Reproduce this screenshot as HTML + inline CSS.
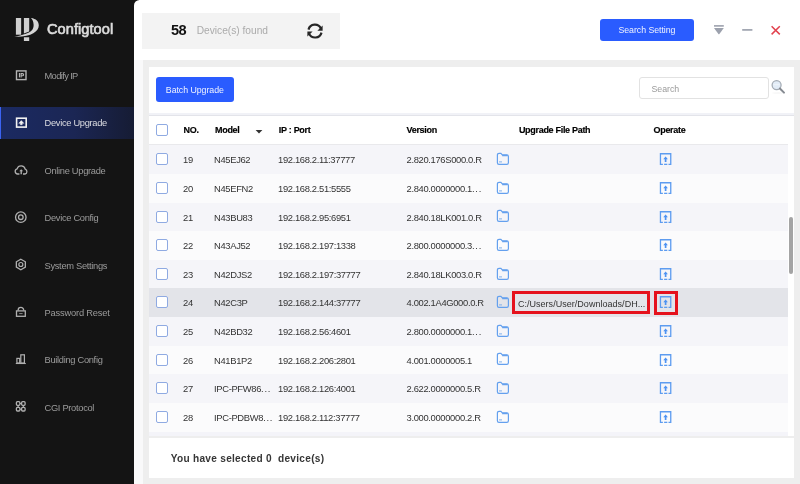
<!DOCTYPE html>
<html><head><meta charset="utf-8">
<style>
*{margin:0;padding:0;box-sizing:border-box}
html,body{width:800px;height:484px;overflow:hidden;background:#141414;font-family:"Liberation Sans",sans-serif}
#side{position:absolute;left:0;top:0;width:134px;height:484px;background:#141414}
.logo{position:absolute;left:0;top:0}
.brand{position:absolute;left:47px;top:19px;color:#dcdcdc;font-size:14.6px;font-weight:normal;letter-spacing:0.05px;line-height:20px;-webkit-text-stroke:0.65px #dcdcdc}
.nav{position:absolute;left:0;width:134px;height:31.3px;color:#9c9c9c;font-size:9.3px;line-height:35px}
.nav .t{position:absolute;left:44.5px;top:0;letter-spacing:-0.3px}
.nav.act{background:linear-gradient(90deg,#1b2a62 0%,#1b2654 55%,#161c34 100%);color:#dcdde2}
.nav.act .t{top:-1.4px}
.nav.act:before{content:"";position:absolute;left:0;top:0;width:1.3px;height:100%;background:#3b63f2}
.icons{position:absolute;left:0;top:0}
#main{position:absolute;left:134px;top:0;width:666px;height:484px;background:#fff;border-top-left-radius:5.5px}
.found{position:absolute;left:8.3px;top:13px;width:198px;height:36.3px;background:#f3f3f3}
.found .n{position:absolute;left:28.7px;top:0;line-height:35px;font-size:14.6px;font-weight:bold;color:#111;letter-spacing:-0.7px}
.found .l{position:absolute;left:54.4px;top:0;line-height:36px;font-size:10.2px;color:#ababab}
.btn{position:absolute;background:#2a5cff;color:#eef2ff;border-radius:3px;font-size:8.8px;text-align:center;letter-spacing:-0.05px}
#content{position:absolute;left:9px;top:60px;width:657px;height:424px;background:#eeeeee}
#card{position:absolute;left:5.5px;top:6.5px;width:645.5px;height:369px;background:#fff}
#foot{position:absolute;left:5.5px;top:377.8px;width:645.5px;height:40px;background:#fff}
#foot .t{position:absolute;left:22.3px;top:0;line-height:41.6px;font-size:10.1px;font-weight:bold;color:#363636;white-space:pre;letter-spacing:0.28px}
.search{position:absolute;left:490.3px;top:10.6px;width:129.8px;height:21.8px;border:1px solid #e2e2e2;border-radius:3px;font-size:8.8px;color:#9a9a9a;line-height:23.4px;padding-left:11.6px}
.band{position:absolute;left:0;top:46.4px;width:645.5px;height:3.3px;background:#f1f2f7;border-bottom:1px solid #e3e4ea}
.hdr{position:absolute;left:0;top:49.7px;width:639.3px;height:28.8px;background:#fff;border-bottom:1px solid #e9e9ec;font-size:9px;font-weight:bold;color:#000;letter-spacing:-0.3px;-webkit-text-stroke:0.15px #000}
.hdr span{position:absolute;top:0;line-height:29.3px;white-space:nowrap}
.row{position:absolute;left:0;width:639.3px;height:28.6px;font-size:9.4px;color:#333;letter-spacing:-0.33px}
.row span{position:absolute;top:0;line-height:30.9px;white-space:nowrap}
.sh{background:#f5f5f9}.wh{background:#fbfbfc}.hl{background:#e3e4e9}
.cb{position:absolute;left:7.1px;top:8.1px;width:12.2px;height:11.9px;border:1.2px solid #8faae2;border-radius:2px;background:#fff}
.hdr .cb{top:8.3px}
.c1{left:34.5px}.c2{left:65.5px}.c3{left:129.5px}.c4{left:258px}
.hdr .c1{left:35px}.hdr .c2{left:66.5px}.hdr .c3{left:130.3px}
.fo{position:absolute;left:347.3px;top:6.9px}
.up{position:absolute;left:510.4px;top:7.0px}
.pathbox{position:absolute;left:363.5px;top:2.2px;width:137.5px;height:23.9px;border:3.2px solid #e5121d;background:#e3e4e9;font-size:9px;color:#333;line-height:21.3px;padding-left:2.9px;white-space:nowrap;letter-spacing:0.03px;overflow:hidden}
.opbox{position:absolute;left:505.4px;top:2.5px;width:24.4px;height:24.6px;border:3.2px solid #e5121d}
.scroll{position:absolute;left:640.9px;top:150.9px;width:4px;height:56.3px;background:#a4a4a4;border-radius:2px}
.el{font-style:normal;letter-spacing:0.75px}
.strip{position:absolute;left:0;top:364.2px;width:639.3px;height:5.3px;background:linear-gradient(#fbfbfc 0,#fbfbfc 1px,#f4f4f9 1px)}
#side,#main{will-change:transform}
</style></head><body>
<div id="side">
  <svg class="logo" width="45" height="45" viewBox="0 0 45 45">
    <path d="M15.9 18h5.25v16.7H15.9z" fill="#d0d0d0"/>
    <path d="M23.9 18.1h5.3V31.4L23.9 33.5z" fill="#d0d0d0"/>
    <path d="M23.9 37.2h5.3v3.8h-5.3z" fill="#d0d0d0"/>
    <path d="M30.9 18C36.2 18.6 38.9 21.6 38.8 25.6C38.6 31.8 31 37.3 14.3 36.7C22.5 35.6 29 33.2 31.6 30.6C33.3 28.7 33.8 26.5 33.6 24.5C33.4 21.6 32.6 19.5 30.9 18Z" fill="#d4d4d4"/>
  </svg>
  <div class="brand">Configtool</div>
  
  <div class="nav" style="top:59.3px"><span class="t" style="letter-spacing:-0.62px">Modify IP</span></div>
  <div class="nav act" style="top:107.4px"><span class="t">Device Upgrade</span></div>
  <div class="nav" style="top:154.4px"><span class="t">Online Upgrade</span></div>
  <div class="nav" style="top:201.4px"><span class="t">Device Config</span></div>
  <div class="nav" style="top:249.4px"><span class="t">System Settings</span></div>
  <div class="nav" style="top:296.1px"><span class="t" style="letter-spacing:-0.18px">Password Reset</span></div>
  <div class="nav" style="top:343.2px"><span class="t">Building Config</span></div>
  <div class="nav" style="top:391.4px"><span class="t">CGI Protocol</span></div>
  <svg class="icons" width="40" height="484" viewBox="0 0 40 484" fill="none">
    <!-- Modify IP -->
    <rect x="16.5" y="70.9" width="9.5" height="8.7" stroke="#b4b4b4" stroke-width="1.4"/>
    <path d="M18.9 73h1.2v4.4h-1.2z" fill="#b4b4b4"/>
    <path d="M21.1 77.4V73.6h1.4a1.1 1.1 0 0 1 0 2.2h-1.4" stroke="#b4b4b4" stroke-width="1.1"/>
    <!-- Device upgrade -->
    <rect x="16.6" y="118.2" width="9.6" height="8.9" stroke="#f2f2f2" stroke-width="1.6"/>
    <path d="M18.8 123.3L21.3 120.6L23.8 123.3H22.2V124.7H20.4V123.3Z" fill="#f2f2f2" stroke="#f2f2f2" stroke-width="0.5" stroke-linejoin="round"/>
    <!-- Online upgrade cloud -->
    <path d="M19.4 174H17.6a2.6 2.6 0 0 1 -0.5 -5.1a4.2 4.2 0 0 1 8.1 0.3a2.5 2.5 0 0 1 -0.2 4.8H23" stroke="#b0b0b0" stroke-width="1.3"/>
    <path d="M21.2 169.2l-2 2.1h1.3v2.9h1.4v-2.9h1.3z" fill="#b0b0b0"/>
    <!-- device config target -->
    <circle cx="20.8" cy="217.2" r="5.25" stroke="#b0b0b0" stroke-width="1.3"/>
    <circle cx="20.8" cy="217.2" r="2.3" stroke="#b0b0b0" stroke-width="1.3"/>
    <!-- system settings hex -->
    <path d="M20.85 259.2l4.5 2.6v5.3l-4.5 2.6l-4.5-2.6v-5.3z" stroke="#b0b0b0" stroke-width="1.3"/>
    <circle cx="20.85" cy="264.5" r="2" stroke="#b0b0b0" stroke-width="1.2"/>
    <!-- password lock -->
    <path d="M18.1 310.6v-0.4a2.8 2.8 0 0 1 5.6 0v0.4" stroke="#b0b0b0" stroke-width="1.3"/>
    <rect x="16.5" y="310.9" width="8.8" height="5.4" stroke="#b0b0b0" stroke-width="1.3"/>
    <path d="M19.2 313.6h3.4" stroke="#8a8a8a" stroke-width="1"/>
    <!-- building -->
    <rect x="16.9" y="358.4" width="2.8" height="4.6" stroke="#b0b0b0" stroke-width="1.2"/>
    <rect x="20.8" y="354.8" width="3.6" height="8.2" stroke="#b0b0b0" stroke-width="1.2"/>
    <path d="M15.8 363.5h10" stroke="#b0b0b0" stroke-width="1.1"/>
    <!-- CGI -->
    <rect x="16.4" y="401.7" width="3.5" height="3.6" rx="1" stroke="#b0b0b0" stroke-width="1.3"/>
    <rect x="21.6" y="401.7" width="3.5" height="3.6" rx="1" stroke="#b0b0b0" stroke-width="1.3"/>
    <rect x="16.4" y="407.4" width="3.5" height="3.6" rx="1" stroke="#b0b0b0" stroke-width="1.3"/>
    <rect x="21.6" y="407.4" width="3.5" height="3.6" rx="1" stroke="#b0b0b0" stroke-width="1.3"/>
    <path d="M19.9 403.5h1.7M19.9 409.2h1.7M18.15 405.3v2.1M23.35 405.3v2.1" stroke="#b0b0b0" stroke-width="1.1"/>
  </svg>
</div>
<div id="main">
  <div class="found"><span class="n">58</span><span class="l">Device(s) found</span>
    <svg style="position:absolute;left:162.6px;top:8.3px" width="20" height="20" viewBox="0 0 20 20" fill="none">
      <path d="M3.5 8.6A6.6 6.6 0 0 1 15.9 7.6" stroke="#262626" stroke-width="2.2"/>
      <path d="M17.6 4.6v5.2h-5.2z" fill="#262626"/>
      <path d="M16.5 11.6A6.6 6.6 0 0 1 4.1 12.6" stroke="#262626" stroke-width="2.2"/>
      <path d="M2.4 15.6v-5.2h5.2z" fill="#262626"/>
    </svg>
  </div>
  <div class="btn" style="left:466.2px;top:18.9px;width:93.5px;height:21.7px;line-height:23.7px">Search Setting</div>
  <svg style="position:absolute;left:570px;top:20px" width="60" height="20" viewBox="0 0 60 20">
    <path d="M10 5.1h9.8v1.6H10z" fill="#9ca1ad"/>
    <path d="M10 7.9h9.8l-4.4 6.1q-0.5 0.6-1 0z" fill="#9ca1ad"/>
    <path d="M38.2 9h10.2v1.8H38.2z" fill="#a3a8b3"/>
  </svg>
  <svg style="position:absolute;left:635px;top:24px" width="14" height="14" viewBox="0 0 14 14">
    <path d="M2.6 2.2l8.2 8.2M10.8 2.2l-8.2 8.2" stroke="#e2424e" stroke-width="1.5"/>
  </svg>
  <div style="position:absolute;left:0;top:60px;width:9px;height:424px;background:#f9f9fa"></div>
  <div id="content">
    <div id="card">
      <div class="btn" style="left:7.2px;top:10.8px;width:78.3px;height:25.2px;line-height:27.4px">Batch Upgrade</div>
      <div class="search">Search</div>
      <svg style="position:absolute;left:621.6px;top:12.6px" width="16" height="16" viewBox="0 0 16 16">
        <ellipse cx="8" cy="14" rx="6" ry="0.8" fill="#000" opacity="0.04"/>
        <circle cx="6.6" cy="6.1" r="4.5" fill="#e2ecf7" stroke="#a3abb4" stroke-width="1.25"/>
        <path d="M3.5 5.6h6.2" stroke="#f2f6fb" stroke-width="1.2" opacity="0.7"/>
        <path d="M9.9 9.5l4.1 4.1" stroke="#858a91" stroke-width="2" stroke-linecap="round"/>
      </svg>
      <div class="band"></div>
      <div class="hdr"><i class="cb"></i><span class="c1">NO.</span><span class="c2">Model</span>
        <svg style="position:absolute;left:106.8px;top:12.6px" width="9" height="6" viewBox="0 0 9 6"><path d="M0.6 1.1h6.8l-3.4 3.3z" fill="#333"/></svg>
        <span class="c3">IP : Port</span><span class="c4">Version</span><span style="left:370.4px">Upgrade File Path</span><span style="left:505px">Operate</span></div>
<div class="row sh" style="top:78.90px"><i class="cb"></i><span class="c1">19</span><span class="c2">N45EJ62</span><span class="c3">192.168.2.11:37777</span><span class="c4">2.820.176S000.0.R</span><svg class="fo" width="14" height="14" viewBox="0 0 14 14"><path d="M1.4 3q0-1.7 1.7-1.7h1.8l1.4 1.5h4.5q1.6 0 1.6 1.6v6.4q0 1.6-1.6 1.6H3q-1.6 0-1.6-1.6z" fill="none" stroke="#64a0ee" stroke-width="1.2"/><path d="M6.2 3.5h5.4" stroke="#64a0ee" stroke-width="1.5"/><path d="M3 9.9h3" stroke="#80b0ea" stroke-width="1"/></svg><svg class="up" width="14" height="14" viewBox="0 0 14 14"><path d="M3.9 12.35H1.45V1.75h10.3v10.6H9.5" fill="none" stroke="#5d9cf0" stroke-width="1.3"/><path d="M5.1 12.35h3.2" stroke="#5d9cf0" stroke-width="1.3"/><path d="M6.6 4.4L4.3 7.3h1.45v2.8h1.7V7.3h1.45z" fill="#4d92f2"/></svg></div>
<div class="row wh" style="top:107.49px"><i class="cb"></i><span class="c1">20</span><span class="c2">N45EFN2</span><span class="c3">192.168.2.51:5555</span><span class="c4">2.840.0000000.1<em class="el">...</em></span><svg class="fo" width="14" height="14" viewBox="0 0 14 14"><path d="M1.4 3q0-1.7 1.7-1.7h1.8l1.4 1.5h4.5q1.6 0 1.6 1.6v6.4q0 1.6-1.6 1.6H3q-1.6 0-1.6-1.6z" fill="none" stroke="#64a0ee" stroke-width="1.2"/><path d="M6.2 3.5h5.4" stroke="#64a0ee" stroke-width="1.5"/><path d="M3 9.9h3" stroke="#80b0ea" stroke-width="1"/></svg><svg class="up" width="14" height="14" viewBox="0 0 14 14"><path d="M3.9 12.35H1.45V1.75h10.3v10.6H9.5" fill="none" stroke="#5d9cf0" stroke-width="1.3"/><path d="M5.1 12.35h3.2" stroke="#5d9cf0" stroke-width="1.3"/><path d="M6.6 4.4L4.3 7.3h1.45v2.8h1.7V7.3h1.45z" fill="#4d92f2"/></svg></div>
<div class="row sh" style="top:136.08px"><i class="cb"></i><span class="c1">21</span><span class="c2">N43BU83</span><span class="c3">192.168.2.95:6951</span><span class="c4">2.840.18LK001.0.R</span><svg class="fo" width="14" height="14" viewBox="0 0 14 14"><path d="M1.4 3q0-1.7 1.7-1.7h1.8l1.4 1.5h4.5q1.6 0 1.6 1.6v6.4q0 1.6-1.6 1.6H3q-1.6 0-1.6-1.6z" fill="none" stroke="#64a0ee" stroke-width="1.2"/><path d="M6.2 3.5h5.4" stroke="#64a0ee" stroke-width="1.5"/><path d="M3 9.9h3" stroke="#80b0ea" stroke-width="1"/></svg><svg class="up" width="14" height="14" viewBox="0 0 14 14"><path d="M3.9 12.35H1.45V1.75h10.3v10.6H9.5" fill="none" stroke="#5d9cf0" stroke-width="1.3"/><path d="M5.1 12.35h3.2" stroke="#5d9cf0" stroke-width="1.3"/><path d="M6.6 4.4L4.3 7.3h1.45v2.8h1.7V7.3h1.45z" fill="#4d92f2"/></svg></div>
<div class="row wh" style="top:164.67px"><i class="cb"></i><span class="c1">22</span><span class="c2">N43AJ52</span><span class="c3">192.168.2.197:1338</span><span class="c4">2.800.0000000.3<em class="el">...</em></span><svg class="fo" width="14" height="14" viewBox="0 0 14 14"><path d="M1.4 3q0-1.7 1.7-1.7h1.8l1.4 1.5h4.5q1.6 0 1.6 1.6v6.4q0 1.6-1.6 1.6H3q-1.6 0-1.6-1.6z" fill="none" stroke="#64a0ee" stroke-width="1.2"/><path d="M6.2 3.5h5.4" stroke="#64a0ee" stroke-width="1.5"/><path d="M3 9.9h3" stroke="#80b0ea" stroke-width="1"/></svg><svg class="up" width="14" height="14" viewBox="0 0 14 14"><path d="M3.9 12.35H1.45V1.75h10.3v10.6H9.5" fill="none" stroke="#5d9cf0" stroke-width="1.3"/><path d="M5.1 12.35h3.2" stroke="#5d9cf0" stroke-width="1.3"/><path d="M6.6 4.4L4.3 7.3h1.45v2.8h1.7V7.3h1.45z" fill="#4d92f2"/></svg></div>
<div class="row sh" style="top:193.26px"><i class="cb"></i><span class="c1">23</span><span class="c2">N42DJS2</span><span class="c3">192.168.2.197:37777</span><span class="c4">2.840.18LK003.0.R</span><svg class="fo" width="14" height="14" viewBox="0 0 14 14"><path d="M1.4 3q0-1.7 1.7-1.7h1.8l1.4 1.5h4.5q1.6 0 1.6 1.6v6.4q0 1.6-1.6 1.6H3q-1.6 0-1.6-1.6z" fill="none" stroke="#64a0ee" stroke-width="1.2"/><path d="M6.2 3.5h5.4" stroke="#64a0ee" stroke-width="1.5"/><path d="M3 9.9h3" stroke="#80b0ea" stroke-width="1"/></svg><svg class="up" width="14" height="14" viewBox="0 0 14 14"><path d="M3.9 12.35H1.45V1.75h10.3v10.6H9.5" fill="none" stroke="#5d9cf0" stroke-width="1.3"/><path d="M5.1 12.35h3.2" stroke="#5d9cf0" stroke-width="1.3"/><path d="M6.6 4.4L4.3 7.3h1.45v2.8h1.7V7.3h1.45z" fill="#4d92f2"/></svg></div>
<div class="row hl" style="top:221.85px"><i class="cb"></i><span class="c1">24</span><span class="c2">N42C3P</span><span class="c3">192.168.2.144:37777</span><span class="c4">4.002.1A4G000.0.R</span><svg class="fo" width="14" height="14" viewBox="0 0 14 14"><path d="M1.4 3q0-1.7 1.7-1.7h1.8l1.4 1.5h4.5q1.6 0 1.6 1.6v6.4q0 1.6-1.6 1.6H3q-1.6 0-1.6-1.6z" fill="none" stroke="#64a0ee" stroke-width="1.2"/><path d="M6.2 3.5h5.4" stroke="#64a0ee" stroke-width="1.5"/><path d="M3 9.9h3" stroke="#80b0ea" stroke-width="1"/></svg><svg class="up" width="14" height="14" viewBox="0 0 14 14"><path d="M3.9 12.35H1.45V1.75h10.3v10.6H9.5" fill="none" stroke="#5d9cf0" stroke-width="1.3"/><path d="M5.1 12.35h3.2" stroke="#5d9cf0" stroke-width="1.3"/><path d="M6.6 4.4L4.3 7.3h1.45v2.8h1.7V7.3h1.45z" fill="#4d92f2"/></svg><div class="pathbox">C:/Users/User/Downloads/DH...</div><div class="opbox"></div></div>
<div class="row sh" style="top:250.44px"><i class="cb"></i><span class="c1">25</span><span class="c2">N42BD32</span><span class="c3">192.168.2.56:4601</span><span class="c4">2.800.0000000.1<em class="el">...</em></span><svg class="fo" width="14" height="14" viewBox="0 0 14 14"><path d="M1.4 3q0-1.7 1.7-1.7h1.8l1.4 1.5h4.5q1.6 0 1.6 1.6v6.4q0 1.6-1.6 1.6H3q-1.6 0-1.6-1.6z" fill="none" stroke="#64a0ee" stroke-width="1.2"/><path d="M6.2 3.5h5.4" stroke="#64a0ee" stroke-width="1.5"/><path d="M3 9.9h3" stroke="#80b0ea" stroke-width="1"/></svg><svg class="up" width="14" height="14" viewBox="0 0 14 14"><path d="M3.9 12.35H1.45V1.75h10.3v10.6H9.5" fill="none" stroke="#5d9cf0" stroke-width="1.3"/><path d="M5.1 12.35h3.2" stroke="#5d9cf0" stroke-width="1.3"/><path d="M6.6 4.4L4.3 7.3h1.45v2.8h1.7V7.3h1.45z" fill="#4d92f2"/></svg></div>
<div class="row wh" style="top:279.03px"><i class="cb"></i><span class="c1">26</span><span class="c2">N41B1P2</span><span class="c3">192.168.2.206:2801</span><span class="c4">4.001.0000005.1</span><svg class="fo" width="14" height="14" viewBox="0 0 14 14"><path d="M1.4 3q0-1.7 1.7-1.7h1.8l1.4 1.5h4.5q1.6 0 1.6 1.6v6.4q0 1.6-1.6 1.6H3q-1.6 0-1.6-1.6z" fill="none" stroke="#64a0ee" stroke-width="1.2"/><path d="M6.2 3.5h5.4" stroke="#64a0ee" stroke-width="1.5"/><path d="M3 9.9h3" stroke="#80b0ea" stroke-width="1"/></svg><svg class="up" width="14" height="14" viewBox="0 0 14 14"><path d="M3.9 12.35H1.45V1.75h10.3v10.6H9.5" fill="none" stroke="#5d9cf0" stroke-width="1.3"/><path d="M5.1 12.35h3.2" stroke="#5d9cf0" stroke-width="1.3"/><path d="M6.6 4.4L4.3 7.3h1.45v2.8h1.7V7.3h1.45z" fill="#4d92f2"/></svg></div>
<div class="row sh" style="top:307.62px"><i class="cb"></i><span class="c1">27</span><span class="c2">IPC-PFW86<em class="el">...</em></span><span class="c3">192.168.2.126:4001</span><span class="c4">2.622.0000000.5.R</span><svg class="fo" width="14" height="14" viewBox="0 0 14 14"><path d="M1.4 3q0-1.7 1.7-1.7h1.8l1.4 1.5h4.5q1.6 0 1.6 1.6v6.4q0 1.6-1.6 1.6H3q-1.6 0-1.6-1.6z" fill="none" stroke="#64a0ee" stroke-width="1.2"/><path d="M6.2 3.5h5.4" stroke="#64a0ee" stroke-width="1.5"/><path d="M3 9.9h3" stroke="#80b0ea" stroke-width="1"/></svg><svg class="up" width="14" height="14" viewBox="0 0 14 14"><path d="M3.9 12.35H1.45V1.75h10.3v10.6H9.5" fill="none" stroke="#5d9cf0" stroke-width="1.3"/><path d="M5.1 12.35h3.2" stroke="#5d9cf0" stroke-width="1.3"/><path d="M6.6 4.4L4.3 7.3h1.45v2.8h1.7V7.3h1.45z" fill="#4d92f2"/></svg></div>
<div class="row wh" style="top:336.21px"><i class="cb"></i><span class="c1">28</span><span class="c2">IPC-PDBW8<em class="el">...</em></span><span class="c3">192.168.2.112:37777</span><span class="c4">3.000.0000000.2.R</span><svg class="fo" width="14" height="14" viewBox="0 0 14 14"><path d="M1.4 3q0-1.7 1.7-1.7h1.8l1.4 1.5h4.5q1.6 0 1.6 1.6v6.4q0 1.6-1.6 1.6H3q-1.6 0-1.6-1.6z" fill="none" stroke="#64a0ee" stroke-width="1.2"/><path d="M6.2 3.5h5.4" stroke="#64a0ee" stroke-width="1.5"/><path d="M3 9.9h3" stroke="#80b0ea" stroke-width="1"/></svg><svg class="up" width="14" height="14" viewBox="0 0 14 14"><path d="M3.9 12.35H1.45V1.75h10.3v10.6H9.5" fill="none" stroke="#5d9cf0" stroke-width="1.3"/><path d="M5.1 12.35h3.2" stroke="#5d9cf0" stroke-width="1.3"/><path d="M6.6 4.4L4.3 7.3h1.45v2.8h1.7V7.3h1.45z" fill="#4d92f2"/></svg></div>
      <div class="strip"></div>
      <div class="scroll"></div>
    </div>
    <div id="foot"><span class="t">You have selected 0  device(s)</span></div>
  </div>
</div>
</body></html>
